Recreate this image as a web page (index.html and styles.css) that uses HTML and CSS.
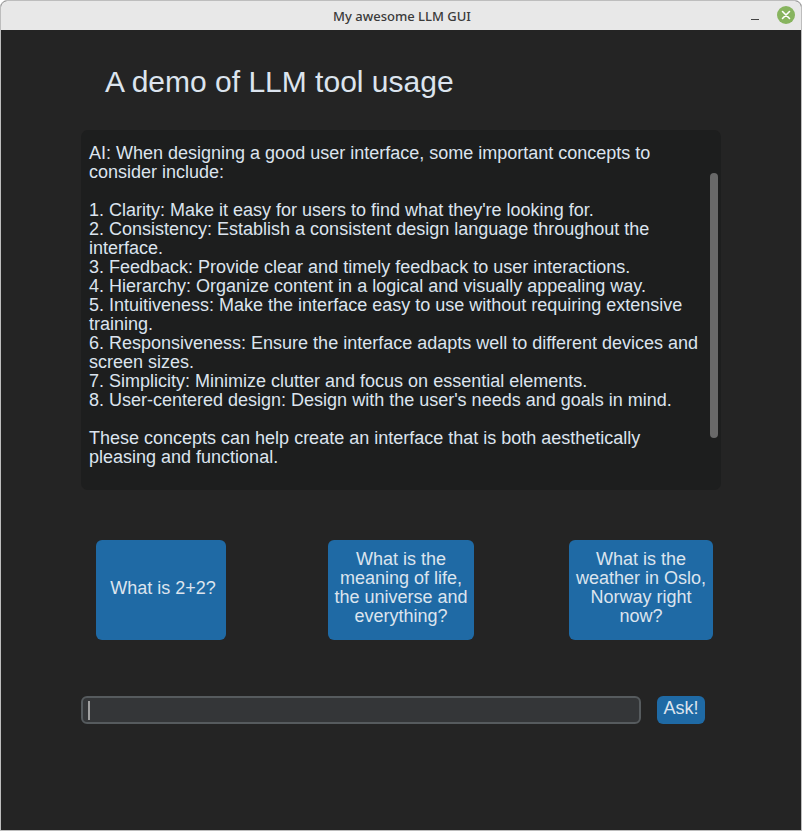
FILE: index.html
```html
<!DOCTYPE html>
<html>
<head>
<meta charset="utf-8">
<title>My awesome LLM GUI</title>
<link rel="stylesheet" href="styles.css">
</head>
<body>
<div class="window">
  <div class="titlebar">
    <span class="title">My awesome LLM GUI</span>
    <div class="controls">
      <span class="minimize"></span>
      <span class="close">
        <svg width="18" height="18" viewBox="0 0 18 18"><path d="M5.5 5.5 L12.5 12.5 M12.5 5.5 L5.5 12.5" stroke="#fff" stroke-width="1.6" stroke-linecap="round"/></svg>
      </span>
    </div>
  </div>
  <div class="content">
    <h1 class="heading">A demo of LLM tool usage</h1>
    <div class="textbox">
      <div class="text">AI: When designing a good user interface, some important concepts to
consider include:

1. Clarity: Make it easy for users to find what they're looking for.
2. Consistency: Establish a consistent design language throughout the
interface.
3. Feedback: Provide clear and timely feedback to user interactions.
4. Hierarchy: Organize content in a logical and visually appealing way.
5. Intuitiveness: Make the interface easy to use without requiring extensive
training.
6. Responsiveness: Ensure the interface adapts well to different devices and
screen sizes.
7. Simplicity: Minimize clutter and focus on essential elements.
8. User-centered design: Design with the user's needs and goals in mind.

These concepts can help create an interface that is both aesthetically
pleasing and functional.</div>
      <div class="scrollbar"></div>
    </div>
    <div class="buttons">
      <button class="btn btn-a">What is 2+2?</button>
      <button class="btn btn-b">What is the<br>meaning of life,<br>the universe and<br>everything?</button>
      <button class="btn btn-c">What is the<br>weather in Oslo,<br>Norway right<br>now?</button>
    </div>
    <div class="askrow">
      <div class="entry"><span class="caret"></span></div>
      <button class="ask">Ask!</button>
    </div>
  </div>
</div>
</body>
</html>
```
FILE: styles.css
```css
* { box-sizing: border-box; }
html, body { margin: 0; padding: 0; }
body {
  width: 802px;
  height: 831px;
  background: #ffffff;
  font-family: "Liberation Sans", Arial, sans-serif;
}
.window {
  width: 802px;
  height: 831px;
  border: 1px solid #bdbdbd;
  border-radius: 7px 7px 0 0;
  overflow: hidden;
  display: flex;
  flex-direction: column;
  background: #242424;
}
.titlebar {
  height: 29px;
  flex: none;
  background: #e8e8e8;
  display: flex;
  align-items: center;
  justify-content: center;
  position: relative;
}
.title {
  font-family: "Noto Sans", "DejaVu Sans", sans-serif;
  font-size: 13px;
  font-weight: 500;
  color: #3a3a3a;
  margin-left: 2px;
}
.controls {
  position: absolute;
  right: 6px;
  top: 5px;
  display: flex;
  align-items: center;
  gap: 18px;
}
.minimize {
  width: 8px;
  height: 1px;
  background: #444;
  margin-top: 9px;
}
.close {
  width: 18px;
  height: 18px;
  border-radius: 50%;
  background: #87b45e;
  display: block;
}
.close svg { display: block; }
.content {
  flex: 1;
  padding: 0 80px 0 80px;
  display: flex;
  flex-direction: column;
}
.heading {
  margin: 36px 0 0 24px;
  font-weight: normal;
  font-size: 30px;
  line-height: 32px;
  color: #dce4ee;
}
.textbox {
  margin-top: 32px;
  width: 640px;
  height: 360px;
  background: #1d1e1e;
  border-radius: 7px;
  position: relative;
  padding: 14px 8px 0 8px;
}
.text {
  white-space: pre;
  font-size: 18px;
  line-height: 19px;
  color: #dce4ee;
}
.scrollbar {
  position: absolute;
  left: 629px;
  top: 43px;
  width: 8px;
  height: 265px;
  border-radius: 4px;
  background: #696969;
}
.buttons {
  margin-top: 50px;
  margin-left: -40px;
  width: 720px;
  display: grid;
  grid-template-columns: 240px 240px 240px;
  justify-items: center;
}
.btn {
  height: 100px;
  border: none;
  border-radius: 6px;
  background: #1f6aa5;
  color: #dce4ee;
  font-family: "Liberation Sans", Arial, sans-serif;
  font-size: 18px;
  line-height: 19px;
  padding: 0 0 4px 0;
  text-align: center;
}
.btn-a { width: 130px; padding-left: 4px; }
.btn-b { width: 146px; }
.btn-c { width: 144px; }
.askrow {
  margin-top: 56px;
  display: flex;
  gap: 16px;
  align-items: center;
}
.entry {
  width: 560px;
  height: 28px;
  border: 2px solid #565b5e;
  border-radius: 6px;
  background: #343638;
  padding: 3px 0 0 5px;
}
.caret {
  display: block;
  width: 2px;
  height: 19px;
  background: #a0a0a0;
}
.ask {
  width: 48px;
  height: 28px;
  border: none;
  border-radius: 6px;
  background: #1f6aa5;
  color: #dce4ee;
  font-family: "Liberation Sans", Arial, sans-serif;
  font-size: 18px;
  padding: 0 0 3px 0;
}
```
